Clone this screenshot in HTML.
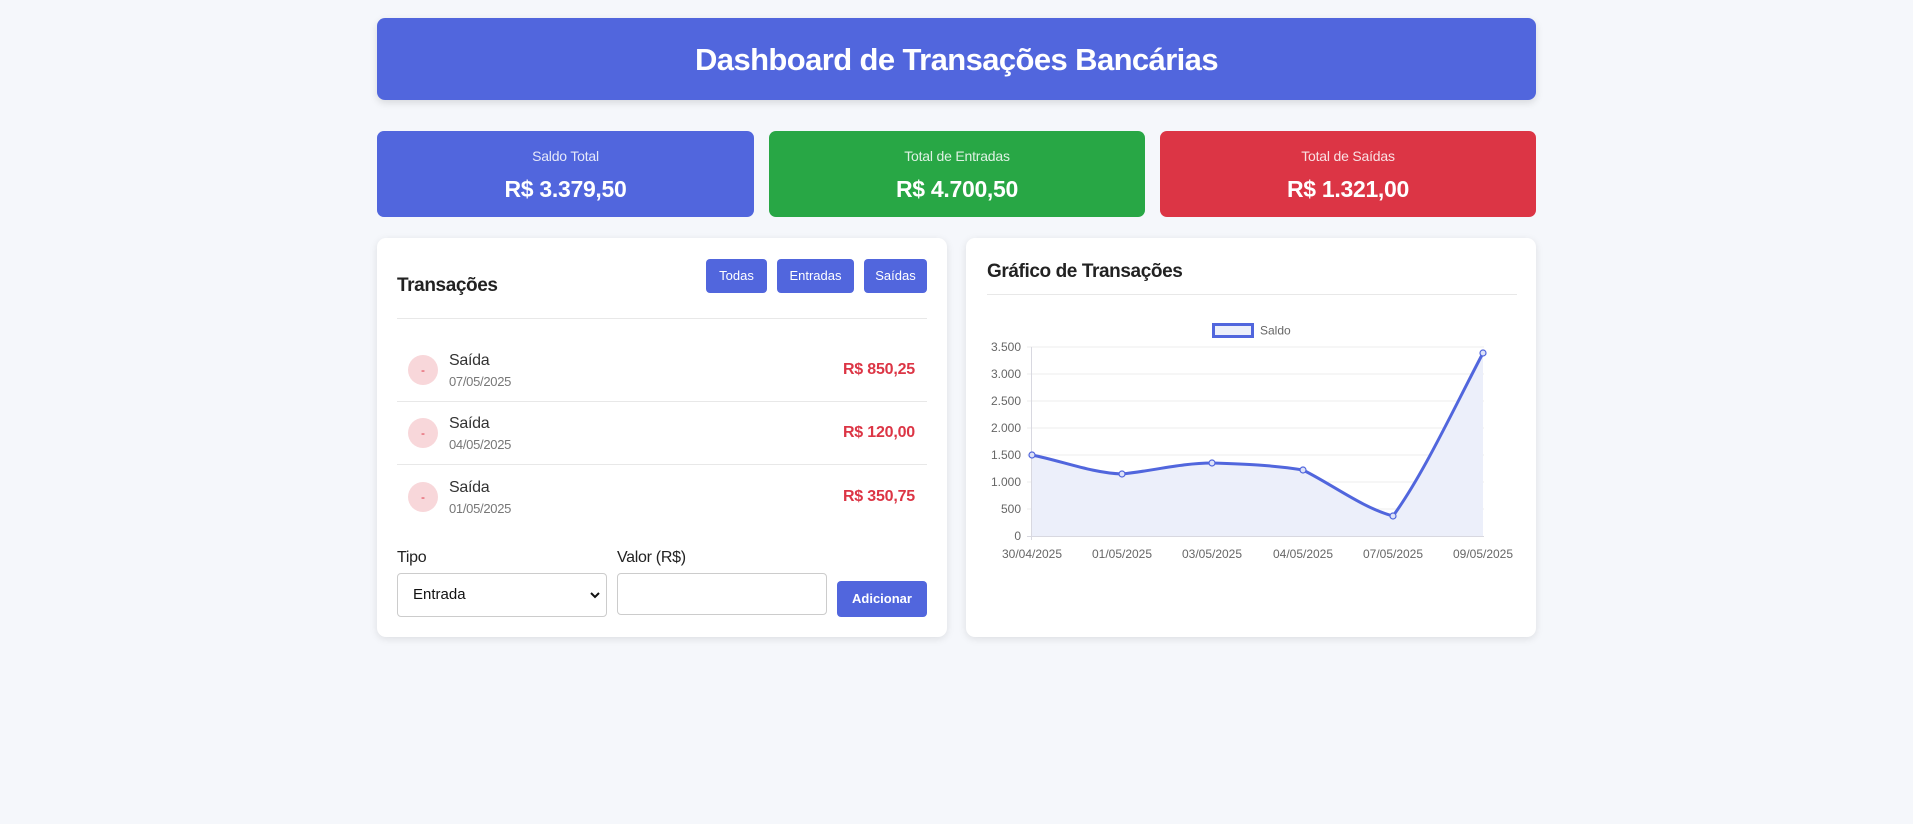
<!DOCTYPE html>
<html><head><meta charset="utf-8">
<style>
*{box-sizing:border-box;margin:0;padding:0}
body{width:1913px;height:824px;background:#f5f7fb;font-family:"Liberation Sans",sans-serif;color:#333;position:relative;overflow:hidden}
.abs{position:absolute}
.header{left:377px;top:18px;width:1159px;height:82px;background:#5166dd;border-radius:8px;box-shadow:0 3px 8px rgba(0,0,0,.12);color:#fff;font-weight:bold;font-size:31px;letter-spacing:-0.6px;text-align:center;line-height:84px}
.card{top:131px;height:86px;border-radius:7px;color:#fff;text-align:center}
.card .l{font-size:14px;margin-top:17px;opacity:.85;letter-spacing:-0.2px}
.card .v{font-size:23px;font-weight:bold;margin-top:12px;letter-spacing:-0.3px}
.panel{top:238px;height:399px;background:#fff;border-radius:9px;box-shadow:0 2px 8px rgba(0,0,0,.1)}
.btn{background:#5166dd;color:#fff;border-radius:4px;font-size:13px;text-align:center;line-height:34px;height:34px;top:259px}
.row .c{width:30px;height:30px;border-radius:50%;background:#f8d7da;color:#dc3545;font-size:12px;text-align:center;line-height:30px}
.t1{font-size:16px;color:#333;letter-spacing:-0.3px}
.t2{font-size:13px;color:#777;letter-spacing:-0.3px}
.amt{font-size:16px;font-weight:bold;color:#dc3545;text-align:right;letter-spacing:-0.2px}
.hr{height:1px;background:#e8e8e8}
</style></head><body>
<div class="abs header">Dashboard de Transações Bancárias</div>
<div class="abs card" style="left:377px;width:377px;background:#5166dd"><div class="l">Saldo Total</div><div class="v">R$ 3.379,50</div></div>
<div class="abs card" style="left:769px;width:376px;background:#28a745"><div class="l">Total de Entradas</div><div class="v">R$ 4.700,50</div></div>
<div class="abs card" style="left:1160px;width:376px;background:#dc3545"><div class="l">Total de Saídas</div><div class="v">R$ 1.321,00</div></div>

<div class="abs panel" style="left:377px;width:570px"></div>
<div class="abs" style="left:397px;top:275px;font-size:19px;font-weight:bold;color:#222;letter-spacing:-0.4px">Transações</div>
<div class="abs btn" style="left:706px;width:61px">Todas</div>
<div class="abs btn" style="left:777px;width:77px">Entradas</div>
<div class="abs btn" style="left:864px;width:63px">Saídas</div>
<div class="abs hr" style="left:397px;top:318px;width:530px"></div>

<div class="abs row" style="left:397px;top:340px;width:530px;height:61px">
<div class="abs c" style="left:11px;top:15px">-</div>
<div class="abs t1" style="left:52px;top:12px">Saída</div>
<div class="abs t2" style="left:52px;top:34px">07/05/2025</div>
<div class="abs amt" style="right:12px;top:21px">R$ 850,25</div></div>
<div class="abs hr" style="left:397px;top:401px;width:530px"></div>
<div class="abs row" style="left:397px;top:403px;width:530px;height:61px">
<div class="abs c" style="left:11px;top:15px">-</div>
<div class="abs t1" style="left:52px;top:12px">Saída</div>
<div class="abs t2" style="left:52px;top:34px">04/05/2025</div>
<div class="abs amt" style="right:12px;top:21px">R$ 120,00</div></div>
<div class="abs hr" style="left:397px;top:464px;width:530px"></div>
<div class="abs row" style="left:397px;top:467px;width:530px;height:61px">
<div class="abs c" style="left:11px;top:15px">-</div>
<div class="abs t1" style="left:52px;top:12px">Saída</div>
<div class="abs t2" style="left:52px;top:34px">01/05/2025</div>
<div class="abs amt" style="right:12px;top:21px">R$ 350,75</div></div>

<div class="abs t1" style="left:397px;top:549px;color:#222">Tipo</div>
<div class="abs t1" style="left:617px;top:549px;color:#222">Valor (R$)</div>
<div class="abs" style="left:397px;top:573px;width:210px;height:44px;border:1px solid #ccc;border-radius:4px;font-size:15px;line-height:42px;padding-left:15px;color:#111">Entrada
<svg class="abs" style="right:6px;top:17px" width="10" height="8" viewBox="0 0 10 8"><path d="M1 2 L5 6 L9 2" stroke="#111" stroke-width="2" fill="none"/></svg></div>
<div class="abs" style="left:617px;top:573px;width:210px;height:42px;border:1px solid #ccc;border-radius:4px"></div>
<div class="abs" style="left:837px;top:581px;width:90px;height:36px;background:#5166dd;border-radius:4px;color:#fff;font-size:13px;font-weight:bold;text-align:center;line-height:36px">Adicionar</div>

<div class="abs panel" style="left:966px;width:570px"></div>
<div class="abs" style="left:987px;top:261px;font-size:19px;font-weight:bold;color:#222;letter-spacing:-0.4px">Gráfico de Transações</div>
<div class="abs hr" style="left:987px;top:294px;width:530px"></div>

<svg class="abs" style="left:966px;top:300px" width="570" height="280" viewBox="966 300 570 280" font-family="Liberation Sans, sans-serif" font-size="12" fill="#666">
<rect x="1213.5" y="324.5" width="39" height="12" fill="#eceffa" stroke="#5166dd" stroke-width="3"/>
<text x="1260" y="334.5" fill="#666">Saldo</text>
<g stroke="#ececec" stroke-width="1">
<line x1="1027" y1="347" x2="1484" y2="347"/><line x1="1027" y1="374" x2="1484" y2="374"/>
<line x1="1027" y1="401" x2="1484" y2="401"/><line x1="1027" y1="428" x2="1484" y2="428"/>
<line x1="1027" y1="455" x2="1484" y2="455"/><line x1="1027" y1="482" x2="1484" y2="482"/>
<line x1="1027" y1="509" x2="1484" y2="509"/>
</g>
<line x1="1031.5" y1="347" x2="1031.5" y2="540" stroke="#d8d8e0"/>
<line x1="1027" y1="536.5" x2="1484" y2="536.5" stroke="#d8d8e0"/>
<g text-anchor="end">
<text x="1021" y="351">3.500</text><text x="1021" y="378">3.000</text><text x="1021" y="405">2.500</text>
<text x="1021" y="432">2.000</text><text x="1021" y="459">1.500</text><text x="1021" y="486">1.000</text>
<text x="1021" y="513">500</text><text x="1021" y="540">0</text></g>
<g text-anchor="middle">
<text x="1032" y="558">30/04/2025</text><text x="1122" y="558">01/05/2025</text><text x="1212" y="558">03/05/2025</text>
<text x="1303" y="558">04/05/2025</text><text x="1393" y="558">07/05/2025</text><text x="1483" y="558">09/05/2025</text></g>
<path d="M1032 455 C1062 461 1092 473 1122 474 C1152 471 1182 463 1212 463 C1242 464 1273 465 1303 470 C1333 485 1363 508 1393 516 C1423 475 1453 410 1483 353 L1483 536 L1032 536 Z" fill="#eceffa"/>
<path d="M1032 455 C1062 461 1092 473 1122 474 C1152 471 1182 463 1212 463 C1242 464 1273 465 1303 470 C1333 485 1363 508 1393 516 C1423 475 1453 410 1483 353" fill="none" stroke="#5166dd" stroke-width="3" stroke-linejoin="round"/>
<g fill="#dde2f8" stroke="#5166dd" stroke-width="1.2">
<circle cx="1032" cy="455" r="3"/><circle cx="1122" cy="474" r="3"/><circle cx="1212" cy="463" r="3"/>
<circle cx="1303" cy="470" r="3"/><circle cx="1393" cy="516" r="3"/><circle cx="1483" cy="353" r="3"/></g>
</svg>
</body></html>
